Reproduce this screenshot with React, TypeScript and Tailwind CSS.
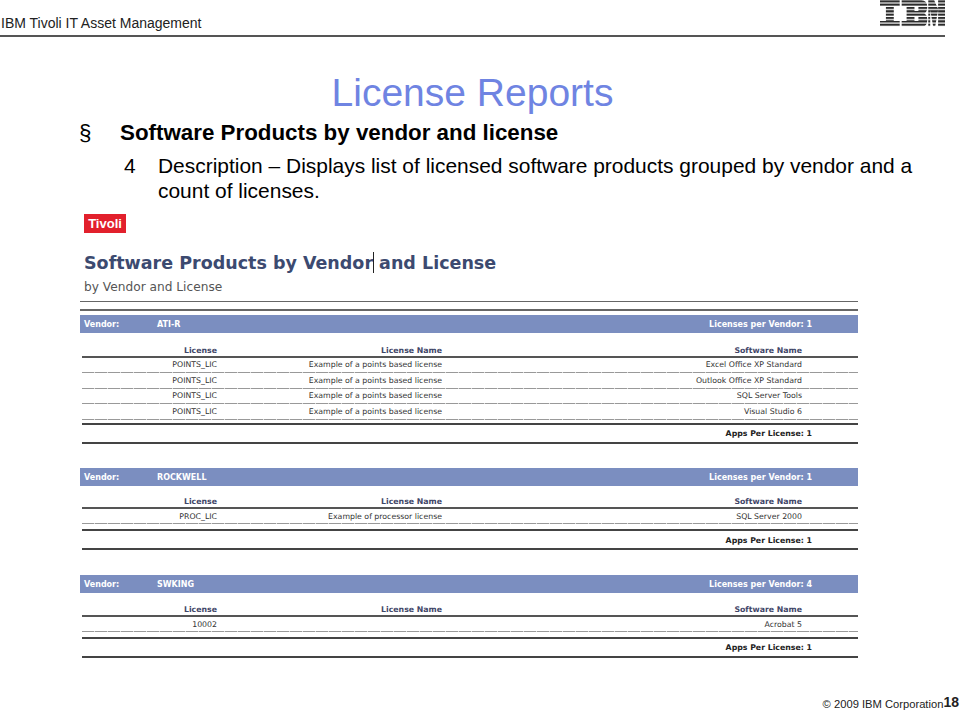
const vendors = [
  {
    name: 'ATI-R',
    count: 1,
    headGap: 'mt-[13px]',
    rowClass: 'h-[14.400px]',
    appsGap: 'mt-[3px]',
    rows: [
      ['POINTS_LIC', 'Example of a points based license', 'Excel Office XP Standard'],
      ['POINTS_LIC', 'Example of a points based license', 'Outlook Office XP Standard'],
      ['POINTS_LIC', 'Example of a points based license', 'SQL Server Tools'],
      ['POINTS_LIC', 'Example of a points based license', 'Visual Studio 6'],
    ],
  },
  {
    name: 'ROCKWELL',
    count: 1,
    headGap: 'mt-[11px]',
    rowClass: 'h-[14px] pt-[2px]',
    appsGap: 'mt-[5px]',
    rows: [['PROC_LIC', 'Example of processor license', 'SQL Server 2000']],
  },
  {
    name: 'SWKING',
    count: 4,
    headGap: 'mt-[12px]',
    rowClass: 'h-[14px] pt-[2px]',
    appsGap: 'mt-[5px]',
    rows: [['10002', '', 'Acrobat 5']],
  },
];

function IbmLogo() {
  return (
    <svg width="65" height="27" viewBox="0 0 66 27" className="block">
      <defs>
        <pattern id="stripes" width="66" height="3.4" patternUnits="userSpaceOnUse">
          <rect width="66" height="2.2" fill="#2b2b2b" />
        </pattern>
      </defs>
      <path
        fill="url(#stripes)"
        d="M0 0h20v6h-6v15h6v6H0v-6h6V6H0zM22 0h20q6 0 6 7 0 5-3 6.500 3 1.500 3 6.500 0 7-6 7H22v-6h5V6h-5zM35 6v5h4V6zM35 16v5h4v-5zM49 0h6l4 9V0h7v27h-7V10l-3 17h-2l-3-17v17h-2z"
      />
    </svg>
  );
}

function VendorBlock({ vendor }: { vendor: (typeof vendors)[number] }) {
  return (
    <div className="font-['DejaVu_Sans',sans-serif] text-[7.800px]">
      <div className="flex h-[18px] items-center bg-[#7b8ec0] pt-[2px] text-[8px] font-bold text-white">
        <span className="ml-[4px] w-[73px]">Vendor:</span>
        <span className="flex-1">{vendor.name}</span>
        <span className="mr-[46px]">Licenses per Vendor: {vendor.count}</span>
      </div>
      <div className="ml-[2px]">
        <div className={`${vendor.headGap} flex h-[12px] items-center border-b-2 border-[#555] font-bold text-[#3f4668]`}>
          <span className="w-[135px] text-right">License</span>
          <span className="w-[225px] text-right">License Name</span>
          <span className="w-[360px] text-right">Software Name</span>
        </div>
        {vendor.rows.map((row, i) => (
          <div key={i}>
            <div className={`${vendor.rowClass} flex items-center text-[#333]`}>
              <span className="w-[135px] text-right">{row[0]}</span>
              <span className="w-[225px] text-right">{row[1]}</span>
              <span className="w-[360px] text-right">{row[2]}</span>
            </div>
            <div className="h-px bg-[repeating-linear-gradient(90deg,#999_0_12px,#ddd_12px_13px)]" />
          </div>
        ))}
        <div className={`${vendor.appsGap} flex h-[21px] items-center justify-end border-y-2 border-[#444] pt-[2px] pr-[46px] font-bold text-[#222]`}>
          Apps Per License: 1
        </div>
      </div>
    </div>
  );
}

export default function App() {
  return (
    <div className="h-[710px] w-[960px] overflow-hidden bg-white font-['Liberation_Sans',Arial,sans-serif] text-black">
      {/* Header */}
      <div className="flex h-[37px] w-[945px] items-end justify-between border-b-2 border-[#555]">
        <span className="mb-[3px] ml-px text-[14px] leading-[18px] text-[#222]">IBM Tivoli IT Asset Management</span>
        <div className="mb-[8px]">
          <IbmLogo />
        </div>
      </div>

      <h1 className="mt-[32px] w-[945px] text-center text-[39px] leading-[48px] font-normal text-[#6f84e2]">
        License Reports
      </h1>

      {/* Bullets */}
      <div className="mt-[4px] ml-[79px] flex items-center text-[22.350px] leading-[24px]">
        <span className="w-[41px] font-normal">§</span>
        <span className="font-bold">Software Products by vendor and license</span>
      </div>
      <div className="mt-[8px] ml-[124px] flex text-[20.950px] leading-[25px]">
        <span className="w-[34px]">4</span>
        <span className="w-[770px]">
          Description – Displays list of licensed software products grouped by vendor and a count of licenses.
        </span>
      </div>

      {/* Report capture */}
      <div className="mt-[11px] ml-[80px] w-[778px]">
        <div className="ml-[4px] flex h-[19px] w-[42px] items-center justify-center bg-[#e2202c] text-[13px] font-bold text-white">
          Tivoli
        </div>
        <div className="relative mt-[20px] ml-[4px] font-['DejaVu_Sans',sans-serif] text-[17.500px] leading-[20px] font-bold text-[#3c4a70]">
          Software Products by Vendor and License
          <span className="absolute top-[-1px] left-[289px] h-[21px] w-px bg-[#222]" />
        </div>
        <div className="mt-[7px] ml-[4px] font-['DejaVu_Sans',sans-serif] text-[12.200px] leading-[14px] text-[#555]">
          by Vendor and License
        </div>
        <div className="mt-[7px] h-[10px] border-t border-b-2 border-[#666]" />
        <div className="mt-[4px] flex flex-col gap-[24.500px]">
          {vendors.map((v) => (
            <VendorBlock key={v.name} vendor={v} />
          ))}
        </div>
      </div>

      {/* Footer */}
      <div className="mt-[35px] flex w-[959px] items-end justify-end text-[#222]">
        <span className="text-[11.200px] leading-[14px]">© 2009 IBM Corporation</span>
        <span className="text-[14px] leading-[18px] font-bold">18</span>
      </div>
    </div>
  );
}
